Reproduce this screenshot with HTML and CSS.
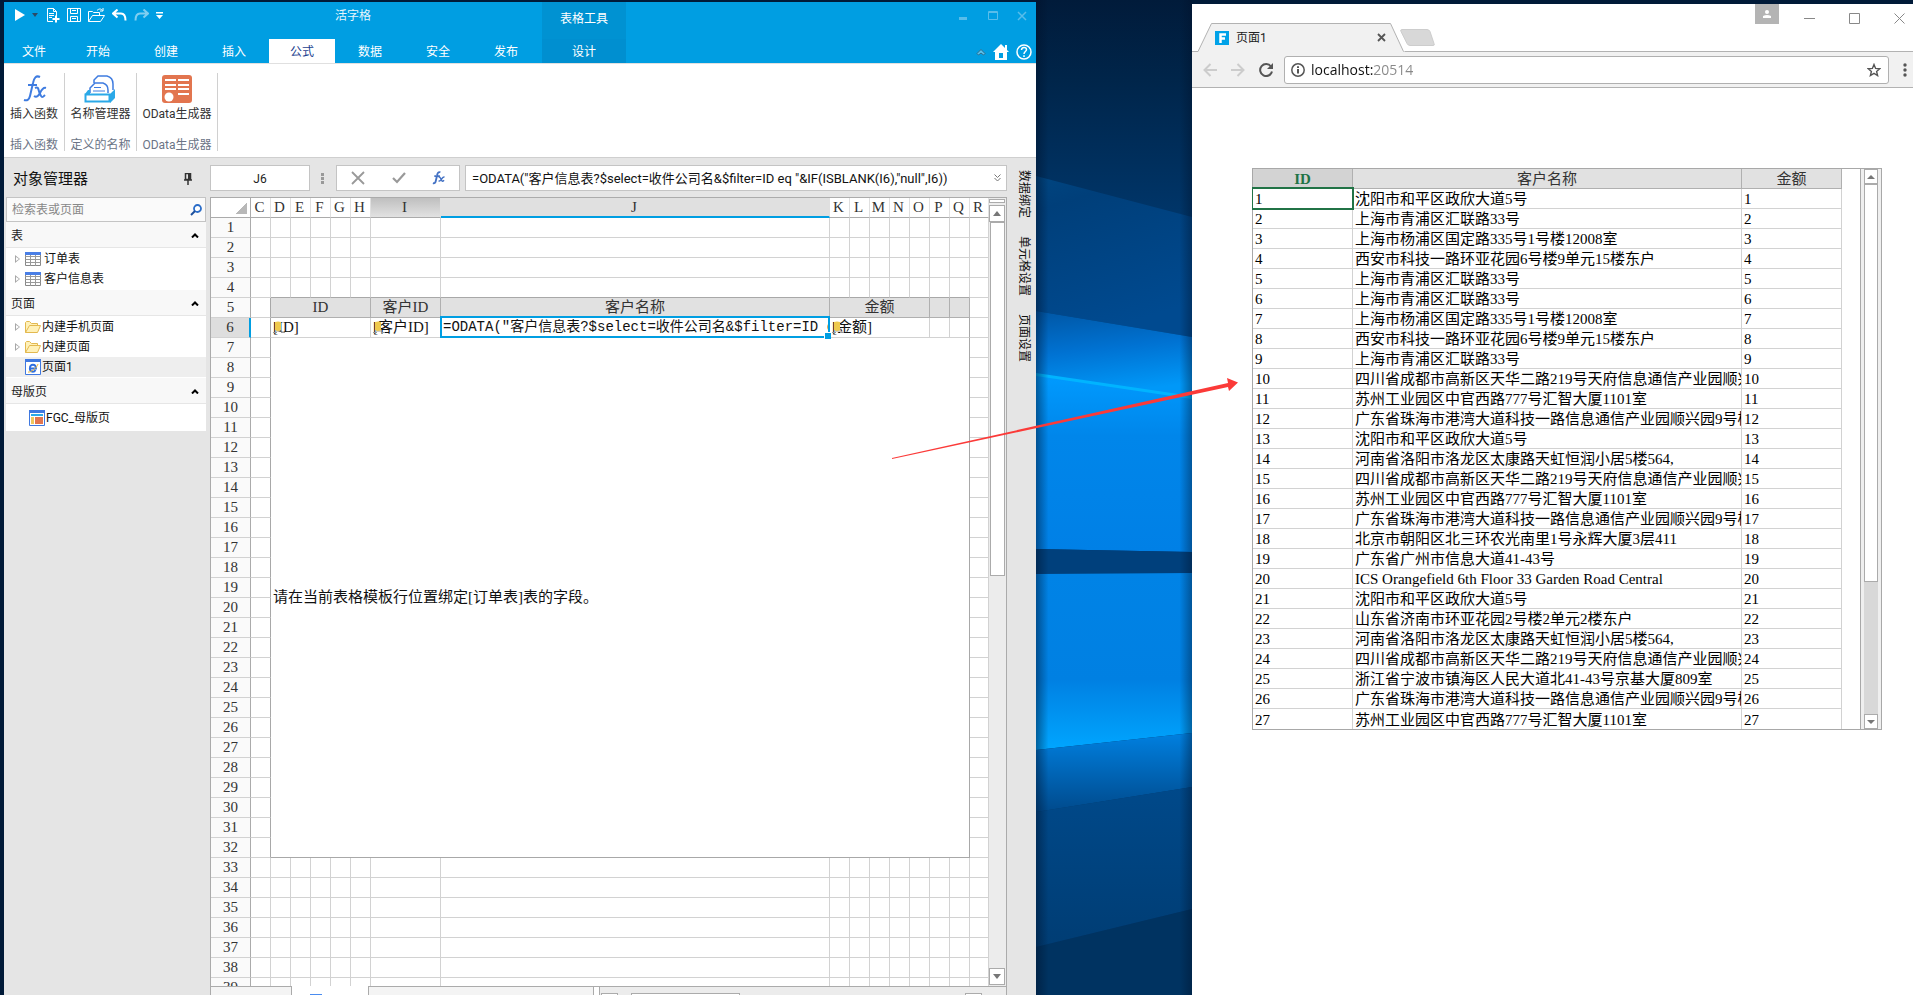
FILE: index.html
```html
<!DOCTYPE html>
<html lang="zh-CN">
<head>
<meta charset="utf-8">
<title>活字格</title>
<link rel="stylesheet" href="styles.css">
</head>
<body>
<div class="desktop">
  <main class="designer">
    <header class="titlebar">
      <div class="title-left">
        <div class="quick">
          <button class="ic" aria-label="运行"><svg width="11" height="14" viewBox="0 0 11 14"><path d="M1 1l10 6-10 6z" fill="#fff"/></svg></button>
          <button class="ic caret" aria-label="运行选项"><svg width="6" height="4" viewBox="0 0 6 4"><path d="M0 0h6L3 4z" fill="#2b4a66"/></svg></button>
          <button class="ic" aria-label="新建"><svg width="14" height="15" viewBox="0 0 14 15" fill="none" stroke="#fff"><path d="M7 13.500H1.500V.5h6l3 3V8M7.500.5v3h3M3 5.500h5M3 7.500h5M3 9.500h3"/><path d="M10 7.500v7M6.500 11h7" stroke-width="2"/></svg></button>
          <button class="ic" aria-label="保存"><svg width="14" height="15" viewBox="0 0 14 15" fill="none" stroke="#fff"><path d="M.5.5h13v13H.5zM3.500.5v5h7v-5M3.500 13.500v-5h7v5M5 10.500h4M5 2.500h4"/></svg></button>
          <button class="ic" aria-label="打开"><svg width="17" height="15" viewBox="0 0 17 15" fill="none" stroke="#fff"><path d="M.5 13.500v-10h4l1 1h6v3M.5 13.500l4-6h12l-4 6zM9 2.500c2-2 4-2 5.500 0M15 0v3h-3"/></svg></button>
          <button class="ic" aria-label="撤销"><svg width="15" height="13" viewBox="0 0 15 13"><path d="M5.500.5L1 4.500l4.500 4M1.500 4.500H9c3 0 4.500 2 4.500 7" fill="none" stroke="#fff" stroke-width="2"/></svg></button>
          <button class="ic dim" aria-label="重做"><svg width="15" height="13" viewBox="0 0 15 13"><path d="M9.500.5L14 4.500l-4.500 4M13.500 4.500H6c-3 0-4.500 2-4.500 7" fill="none" stroke="#fff" stroke-width="2"/></svg></button>
          <button class="ic" aria-label="自定义"><svg width="7" height="7" viewBox="0 0 7 7" fill="#fff"><path d="M0 0h7v1.500H0zM0 3h7L3.500 7z"/></svg></button>
        </div>
        <h1 class="app-title">活字格</h1>
      </div>
      <div class="context-title">表格工具</div>
      <div class="window-buttons">
        <button class="ic" aria-label="最小化"><svg width="10" height="10" viewBox="0 0 10 10"><path d="M0 6h8v3H0z" fill="#58bdea"/></svg></button>
        <button class="ic" aria-label="最大化"><svg width="10" height="10" viewBox="0 0 10 10"><path d="M.5.5h9v8h-9zM0 1.500h10" fill="none" stroke="#58bdea" /></svg></button>
        <button class="ic" aria-label="关闭"><svg width="10" height="10" viewBox="0 0 10 10"><path d="M1 1l8 8M9 1L1 9" stroke="#58bdea" stroke-width="1.500"/></svg></button>
      </div>
    </header>
    <nav class="tabs">
      <button class="tab first">文件</button><button class="tab">开始</button><button class="tab">创建</button><button class="tab">插入</button><button class="tab active">公式</button><button class="tab">数据</button><button class="tab">安全</button><button class="tab">发布</button><button class="tab context">设计</button>
      <div class="tab-tools">
        <button class="ic" aria-label="折叠"><svg width="10" height="8" viewBox="0 0 10 8"><path d="M1 5.500L5 1.500l4 4L7.500 7 5 5 2.500 7z" fill="#5cc3ee" stroke="#336b8a"/></svg></button>
        <button class="ic" aria-label="主页"><svg width="16" height="16" viewBox="0 0 16 16"><path d="M8 0l8 8h-2v8H2V8H0zM6 9v5h4V9zM12 1h2v5l-2-2z" fill="#fff" fill-rule="evenodd"/></svg></button>
        <button class="ic" aria-label="帮助"><svg width="16" height="16" viewBox="0 0 16 16" fill="none" stroke="#fff" stroke-width="1.500"><circle cx="8" cy="8" r="7"/><path d="M5.500 6c0-3.500 5-3.300 5-.5C10.500 7.500 8 7.500 8 10M8 11.300v1.700"/></svg></button>
      </div>
    </nav>
    <section class="ribbon">
      <div class="group g1">
        <button class="tool"><svg width="28" height="28" viewBox="0 0 28 28" fill="none" stroke="#3f7ce0"><path d="M20 2c-4-2-6 1-7 6l-3 13c-1 4-3 5-6 4M8 10h9" stroke-width="2"/><path d="M15 13c4-2 3 2 5 6s2 4 5 1M26 13c-3-1-5 3-6 5s-3 5-6 3" stroke-width="2"/></svg>插入函数</button>
        <span class="group-name">插入函数</span>
      </div>
      <div class="group g2">
        <button class="tool"><svg width="32" height="28" viewBox="0 0 32 28" fill="#fff" stroke="#3f7ce0"><path d="M10 8V5l4-4h9c4 1 6 4 6 8v6" stroke-width="1.500"/><path d="M6 18v-5l5-5h8c3 1 5 3 5 7v3" stroke-width="1.500"/><path d="M10 12.500h7M9 16h12"/><path d="M1 19l3-4h2v4zM26 19l5-5v9l-5 5z" fill="#2ba9e8" stroke="none"/><path d="M1.500 19.500h24v7h-24z" stroke="#2ba9e8" stroke-width="2"/></svg>名称管理器</button>
        <span class="group-name">定义的名称</span>
      </div>
      <div class="group g3">
        <button class="tool"><svg width="30" height="28" viewBox="0 0 30 28"><rect width="30" height="28" rx="3" fill="#e2754f"/><path d="M3 4h11v2H3zM16 4h11v2H16zM3 9h11v2H3zM16 9h11v2H16zM3 13h11v2H3zM16 13h11v2H16zM16 18h11v2H16z" fill="#fff"/><circle cx="7" cy="22" r="4.500" fill="#fff"/></svg>OData生成器</button>
        <span class="group-name">OData生成器</span>
      </div>
    </section>
    <div class="workspace">
      <aside class="explorer">
        <div class="explorer-head"><h2>对象管理器</h2><button class="ic" aria-label="固定"><svg width="8" height="12" viewBox="0 0 8 12"><path d="M1.500.5h5v6h-5zM0 7h8M4 7v5" fill="none" stroke="#333" stroke-width="1.500"/><path d="M4 1h2v6H4z" fill="#333"/></svg></button></div>
        <label class="search"><input type="text" aria-label="检索表或页面" placeholder="检索表或页面"><svg width="12" height="12" viewBox="0 0 12 12"><circle cx="7.500" cy="4.500" r="3.500" fill="#fff" stroke="#2a6cc8" stroke-width="1.800"/><path d="M5 7L1 11" stroke="#1c4f9c" stroke-width="2"/></svg></label>
        <button class="section-head">表<svg width="8" height="5" viewBox="0 0 8 5"><path d="M1 4.500L4 1.500l3 3" fill="none" stroke="#000" stroke-width="2"/></svg></button>
        <ul class="tree">
          <li><i class="twist"></i><svg width="16" height="14" viewBox="0 0 16 14"><path d="M.5.500h15v13H.5z" fill="#fff" stroke="#888"/><path d="M.5 4.500h15M.5 7.500h15M.5 10.500h15M5.500 3v11M10.500 3v11" stroke="#9a9a9a"/><path d="M0 0h16v3H0z" fill="#4a7fe6"/></svg><span class="wide">订单表</span></li>
          <li><i class="twist"></i><svg width="16" height="14" viewBox="0 0 16 14"><path d="M.5.500h15v13H.5z" fill="#fff" stroke="#888"/><path d="M.5 4.500h15M.5 7.500h15M.5 10.500h15M5.500 3v11M10.500 3v11" stroke="#9a9a9a"/><path d="M0 0h16v3H0z" fill="#4a7fe6"/></svg><span class="wide">客户信息表</span></li>
        </ul>
        <button class="section-head">页面<svg width="8" height="5" viewBox="0 0 8 5"><path d="M1 4.500L4 1.500l3 3" fill="none" stroke="#000" stroke-width="2"/></svg></button>
        <ul class="tree">
          <li><i class="twist"></i><svg width="16" height="12" viewBox="0 0 16 12"><path d="M.5 11.500V1.500l1-1h3l2 2h6v2M.5 11.500l4-7h11l-3 7z" fill="#fff1b8" stroke="#e3b94f"/></svg><span>内建手机页面</span></li>
          <li><i class="twist"></i><svg width="16" height="12" viewBox="0 0 16 12"><path d="M.5 11.500V1.500l1-1h3l2 2h6v2M.5 11.500l4-7h11l-3 7z" fill="#fff1b8" stroke="#e3b94f"/></svg><span>内建页面</span></li>
          <li class="current"><i class="twist none"></i><svg width="16" height="16" viewBox="0 0 16 16"><path d="M.5.500h15v15H.5z" fill="#fff" stroke="#3f78e0"/><path d="M0 0h16v3H0z" fill="#3f78e0"/><path d="M5 9.500h6c0-5-6-5-6.200 0 0 4 4.500 4 5.700 1.500" fill="none" stroke="#2f6fe0" stroke-width="1.800"/><path d="M3 13c2 1 9-4 10-8" fill="none" stroke="#e8b53c"/></svg><span>页面1</span></li>
        </ul>
        <button class="section-head">母版页<svg width="8" height="5" viewBox="0 0 8 5"><path d="M1 4.500L4 1.500l3 3" fill="none" stroke="#000" stroke-width="2"/></svg></button>
        <ul class="tree masters">
          <li><svg width="16" height="16" viewBox="0 0 16 16"><path d="M.5.500h15v15H.5z" fill="#fff" stroke="#3f78e0"/><path d="M0 0h16v3H0z" fill="#3f78e0"/><path d="M2 4h12v2H2z" fill="#2ba9e8"/><path d="M2 7h3v7H2z" fill="#f0c75e"/><path d="M6 7h8v7H6z" fill="#e2754f"/></svg><span>FGC_母版页</span></li>
        </ul>
      </aside>
      <section class="center">
        <div class="formula-row">
          <input class="name-box" type="text" aria-label="单元格名称" value="J6">
          <svg class="grip" width="3" height="11" viewBox="0 0 3 11"><path d="M0 0h3v3H0zM0 4h3v3H0zM0 8h3v3H0z" fill="#999"/></svg>
          <div class="formula-buttons">
            <button class="ic" aria-label="取消"><svg width="14" height="14" viewBox="0 0 14 14"><path d="M1 1l12 12M13 1L1 13" stroke="#999" stroke-width="1.800"/></svg></button>
            <button class="ic" aria-label="确认"><svg width="14" height="12" viewBox="0 0 14 12"><path d="M1 6l4 4 8-9" fill="none" stroke="#999" stroke-width="2.200"/></svg></button>
            <button class="ic" aria-label="函数"><svg width="13" height="14" viewBox="0 0 28 28" fill="none" stroke="#4472c4"><path d="M18 2c-4-2-6 1-7 6L8 21c-1 4-3 5-6 4M5 10h12" stroke-width="4"/><path d="M14 12c4-1 4 2 6 6s3 4 6 1M27 12c-4-1-5 3-7 5s-3 5-6 3" stroke-width="3"/></svg></button>
          </div>
          <div class="formula-box"><input type="text" aria-label="公式" value='=ODATA("客户信息表?$select=收件公司名&amp;$filter=ID eq "&amp;IF(ISBLANK(I6),"null",I6))'><button class="ic" aria-label="展开"><svg width="7" height="8" viewBox="0 0 7 8"><path d="M.5.5l3 3 3-3M.5 4l3 3 3-3" fill="none" stroke="#777"/></svg></button></div>
        </div>
        <div class="sheet-frame">
          <div class="sheet-view">
            <table class="sheet">
              <colgroup id="sheet-cols"></colgroup>
              <thead><tr id="sheet-head"></tr></thead>
              <tbody id="sheet-body"></tbody>
            </table>
          </div>
          <div class="vscroll">
            <div class="splitter"></div>
            <button class="arrow" aria-label="向上"><svg width="8" height="5" viewBox="0 0 8 5"><path d="M0 5l4-5 4 5z" fill="#777"/></svg></button>
            <div class="thumb"></div>
            <button class="arrow last" aria-label="向下"><svg width="8" height="5" viewBox="0 0 8 5"><path d="M0 0h8L4 5z" fill="#777"/></svg></button>
          </div>
        </div>
        <div class="sheet-bar">
          <div class="bar-lead"></div>
          <div class="bar-tab"><i></i></div>
          <div class="bar-rest"></div>
          <div class="bar-split"></div>
          <div class="hscroll"><i class="h-left"></i><i class="h-thumb"></i><i class="h-right"></i></div>
        </div>
      </section>
      <nav class="side-tabs"><button>数据绑定</button><button>单元格设置</button><button>页面设置</button></nav>
    </div>
  </main>

  <svg class="wallpaper" viewBox="0 0 156 995" preserveAspectRatio="none" aria-hidden="true">
    <defs>
      <linearGradient id="a" x1="0" y1="0" x2="0" y2="1"><stop offset="0" stop-color="#011b3a"/><stop offset=".08" stop-color="#00254a"/><stop offset=".22" stop-color="#00366a"/><stop offset="1" stop-color="#003a70"/></linearGradient>
      <linearGradient id="b" x1="0" y1="0" x2=".3" y2="1"><stop offset="0" stop-color="#004580"/><stop offset=".2" stop-color="#003f7a"/><stop offset="1" stop-color="#004a90"/></linearGradient>
      <linearGradient id="c" x1="0" y1="0" x2=".2" y2="1"><stop offset="0" stop-color="#0056a4"/><stop offset=".5" stop-color="#0072d2"/><stop offset="1" stop-color="#0098f8"/></linearGradient>
      <linearGradient id="d" x1="0" y1="0" x2="0" y2="1"><stop offset="0" stop-color="#009bff"/><stop offset=".35" stop-color="#0086ea"/><stop offset="1" stop-color="#0080e6"/></linearGradient>
      <linearGradient id="e" x1="0" y1="0" x2="0" y2="1"><stop offset="0" stop-color="#0083e6"/><stop offset=".6" stop-color="#0080e2"/><stop offset="1" stop-color="#00a6ff"/></linearGradient>
      <linearGradient id="f" x1="0" y1="0" x2="0" y2="1"><stop offset="0" stop-color="#0080e0"/><stop offset="1" stop-color="#004a8c"/></linearGradient>
      <linearGradient id="g" x1="0" y1="0" x2="0" y2="1"><stop offset="0" stop-color="#00498a"/><stop offset="1" stop-color="#003d74"/></linearGradient>
      <linearGradient id="s"><stop offset="0" stop-color="#001028" stop-opacity=".45"/><stop offset=".08" stop-color="#001028" stop-opacity="0"/><stop offset=".92" stop-color="#001028" stop-opacity="0"/><stop offset="1" stop-color="#001028" stop-opacity=".4"/></linearGradient>
    </defs>
    <rect width="156" height="995" fill="url(#a)"/>
    <path d="M0 176l156 41v120L0 311z" fill="url(#b)"/>
    <path d="M0 311l156 26v60L0 374z" fill="url(#c)"/>
    <path d="M0 374l156 23v155L0 549z" fill="url(#d)"/>
    <path d="M0 373l156 23v3L0 376z" fill="#00b4ff"/>
    <path d="M0 549l156 3v21L0 574z" fill="#00407c"/>
    <path d="M0 574l156-1v160L0 750z" fill="url(#e)"/>
    <path d="M0 750l156-17v54L0 812z" fill="url(#f)"/>
    <path d="M0 812l156-25v122L0 947z" fill="url(#g)"/>
    <path d="M0 947l156-38v86H0z" fill="#003361"/>
    <rect width="156" height="995" fill="url(#s)"/>
  </svg>

  <section class="browser">
    <header class="browser-top">
      <div class="browser-tab">
        <svg class="tab-shape" viewBox="0 0 208 29" preserveAspectRatio="none"><path d="M0 28.500h1L14.500.5h179l13 28h1.500V29H0z" fill="#f1f1f1" stroke="none"/><path d="M0 28.500h1L14.500.5h179l13 28" fill="none" stroke="#b2b2b2"/></svg>
        <svg class="favicon" width="14" height="14" viewBox="0 0 14 14"><path d="M0 0h14v14H0z" fill="#00a2e8"/><path d="M5.500 12V3.500H11M5.500 7.500H10" fill="none" stroke="#fff" stroke-width="2.500"/></svg>
        <span>页面1</span>
        <button class="ic" aria-label="关闭标签"><svg width="9" height="9" viewBox="0 0 9 9"><path d="M1 1l7 7M8 1L1 8" stroke="#555" stroke-width="1.800"/></svg></button>
      </div>
      <button class="ic new-tab" aria-label="新标签"><svg width="35" height="18" viewBox="0 0 35 18"><path d="M2 .5h25q2 0 3 2l4 12q1 2-1 2H10q-2 0-3-2L1 2.500q-1-2 1-2z" fill="#d8d8d8" stroke="#cdcdcd"/></svg></button>
      <div class="browser-controls">
        <button class="ic person" aria-label="用户"><svg width="8" height="8" viewBox="0 0 8 8" fill="#fff"><circle cx="4" cy="2" r="2"/><path d="M0 8V6q4-2 8 0v2z"/></svg></button>
        <button class="ic" aria-label="最小化"><svg width="11" height="11" viewBox="0 0 11 11"><path d="M0 5.500h11" stroke="#888"/></svg></button>
        <button class="ic" aria-label="最大化"><svg width="11" height="11" viewBox="0 0 11 11"><path d="M.5.5h10v10H.5z" fill="none" stroke="#888"/></svg></button>
        <button class="ic" aria-label="关闭"><svg width="11" height="11" viewBox="0 0 11 11"><path d="M.5.5l10 10M10.500.5l-10 10" stroke="#888"/></svg></button>
      </div>
    </header>
    <div class="toolbar">
      <button class="ic" aria-label="后退"><svg width="14" height="14" viewBox="0 0 14 14"><path d="M14 7H2M7.500 1L1.500 7l6 6" fill="none" stroke="#ccc" stroke-width="2"/></svg></button>
      <button class="ic" aria-label="前进"><svg width="14" height="14" viewBox="0 0 14 14"><path d="M0 7h12M6.500 1l6 6-6 6" fill="none" stroke="#ccc" stroke-width="2"/></svg></button>
      <button class="ic" aria-label="刷新"><svg width="14" height="14" viewBox="0 0 14 14"><path d="M12 3.500A6 6 0 1 0 13 8.500" fill="none" stroke="#555" stroke-width="2"/><path d="M14 0v6H8z" fill="#555"/></svg></button>
      <div class="omnibox">
        <svg width="14" height="14" viewBox="0 0 14 14"><circle cx="7" cy="7" r="6.200" fill="none" stroke="#555" stroke-width="1.500"/><path d="M6 6h2v4.500H6zM6 3.200h2v1.800H6z" fill="#555"/></svg>
        <input type="text" aria-label="地址" value="localhost:20514">
        <button class="ic" aria-label="收藏"><svg width="14" height="14" viewBox="0 0 14 14"><path d="M7 1.500l1.600 3.900 4.200.3-3.200 2.700 1 4.100L7 10.300l-3.600 2.200 1-4.100L1.200 5.700l4.200-.3z" fill="none" stroke="#555" stroke-width="1.400"/></svg></button>
      </div>
      <button class="ic menu" aria-label="菜单"><svg width="4" height="14" viewBox="0 0 4 14" fill="#555"><circle cx="2" cy="2" r="1.700"/><circle cx="2" cy="7" r="1.700"/><circle cx="2" cy="12" r="1.700"/></svg></button>
    </div>
    <div class="page">
      <div class="result">
        <div class="result-view">
          <table class="orders">
            <colgroup><col class="c-id"><col><col class="c-sum"></colgroup>
            <thead><tr><th class="picked">ID</th><th>客户名称</th><th>金额</th></tr></thead>
            <tbody id="orders-body"></tbody>
          </table>
        </div>
        <div class="rscroll">
          <button class="arrow" aria-label="向上"><svg width="8" height="4" viewBox="0 0 8 4"><path d="M0 4l4-4 4 4z" fill="#777"/></svg></button>
          <div class="thumb"></div>
          <button class="arrow last" aria-label="向下"><svg width="8" height="4" viewBox="0 0 8 4"><path d="M0 0h8L4 4z" fill="#777"/></svg></button>
        </div>
      </div>
    </div>
  </section>
  <svg class="pointer" width="348" height="84" viewBox="0 0 348 84" aria-hidden="true"><path d="M1 83L337 8l-1-5 11 4.500L338 16l-1-4L1 84z" fill="#fb3a38"/></svg>
</div>
<script src="app.js"></script>
</body>
</html>
```
FILE: styles.css
```css
* { box-sizing: border-box; }
body { margin: 0; background: #001a38; font: 12px/16px Roboto, "Noto Sans CJK SC", sans-serif; color: #222; }
button, input { font: inherit; color: inherit; border: 0; padding: 0; margin: 0; background: none; min-width: 0; outline: 0; }
h1, h2, ul { margin: 0; padding: 0; font-weight: normal; list-style: none; }
svg { display: block; flex: none; }
.ic { display: flex; align-items: center; justify-content: center; flex: none; }

.desktop { position: relative; display: flex; height: 100vh; overflow: hidden; padding-left: 4px; }
.designer { flex: 1032 1 0; min-width: 0; margin-top: 2px; display: flex; flex-direction: column; background: #e5e5e5; }
.wallpaper { flex: 156 1 0; min-width: 0; height: 100%; }
.browser { flex: 721 1 0; min-width: 0; margin-top: 4px; background: #fff; display: flex; flex-direction: column; }

.titlebar { display: flex; height: 37px; background: #009ee2; color: #fff; }
.title-left { width: 538px; display: flex; }
.quick { display: flex; align-items: center; gap: 7px; height: 26px; padding-left: 10px; width: 331px; }
.quick .caret { margin: 0 1px 0 0; }
.dim { opacity: .5; }
.app-title { font-size: 12px; line-height: 28px; color: #e6f5fc; }
.context-title { width: 84px; background: #0092d2; text-align: center; line-height: 34px; }
.window-buttons { margin-left: auto; display: flex; gap: 19px; height: 28px; align-items: center; padding-right: 9px; }

.tabs { display: flex; height: 24px; background: #009ee2; color: #fff; }
.tab { width: 68px; padding-top: 2px; line-height: 22px; text-align: center; }
.tab.first { width: 60px; }
.tab.active { width: 66px; margin: 0 1px; background: #fff; color: #1d3f8f; }
.tab.context { width: 84px; margin-left: 2px; background: #008fd0; }
.tab-tools { margin-left: auto; display: flex; align-items: center; gap: 7px; padding: 2px 4px 0 0; }

.ribbon { display: flex; height: 95px; background: #fff; border-top: 1px solid #e0e0e0; border-bottom: 1px solid #cfcfcf; padding-top: 9px; }
.group { display: flex; flex-direction: column; align-items: center; height: 78px; border-right: 1px solid #d0d0d0; }
.g1 { width: 61px; } .g2 { width: 72px; } .g3 { width: 81px; }
.tool { display: flex; flex-direction: column; align-items: center; gap: 3px; white-space: nowrap; padding-top: 2px; color: #333; }
.group-name { margin-top: 15px; white-space: nowrap; color: #6b7486; }

.workspace { flex: 1; min-height: 0; display: flex; }
.explorer { width: 200px; margin: 0 4px 0 2px; flex: none; }
.explorer-head { display: flex; align-items: center; justify-content: space-between; height: 39px; padding: 2px 14px 0 7px; }
.explorer-head h2 { font-size: 15px; line-height: 22px; color: #111; }
.search { display: flex; align-items: center; height: 25px; border: 1px solid #c4c4c4; background: #fafafa; padding: 0 3px 0 5px; }
.search input { flex: 1; }
.search input::placeholder { color: #888; opacity: 1; }
.section-head { display: flex; width: 100%; height: 26px; align-items: center; justify-content: space-between; padding: 2px 7px 0 5px; background: #f8f8f8; border-bottom: 1px solid #e6e6e6; }
.tree { background: #fff; padding: 1px 0; color: #111; }
.tree li { display: flex; align-items: center; height: 20px; padding-left: 9px; white-space: nowrap; }
.tree span { padding-left: 1px; }
.tree span.wide { padding-left: 3px; }
.twist { width: 10px; height: 8px; flex: none; background: #a8a8a8; clip-path: path(evenodd, "M0 0L5 4L0 8ZM1 2V6L4 4Z"); }
.twist.none { visibility: hidden; }
.current { background: #eee; }
.tree.masters { padding: 4px 0 3px; }
.masters li { padding-left: 23px; }

.center { flex: 1; min-width: 0; display: flex; flex-direction: column; }
.formula-row { display: flex; align-items: center; height: 26px; margin: 7px 0 6px; flex: none; }
.name-box { width: 100px; height: 26px; border: 1px solid #c4c4c4; background: #fff; text-align: center; padding-top: 2px; }
.grip { margin: 0 12px 0 11px; }
.formula-buttons { display: flex; align-items: center; justify-content: space-between; width: 124px; height: 26px; margin-right: 5px; padding: 0 14px; border: 1px solid #c4c4c4; background: #fff; }
.formula-box { flex: 1; min-width: 0; display: flex; align-items: center; height: 26px; border: 1px solid #c4c4c4; background: #fff; padding: 0 5px 0 6px; color: #111; }
.formula-box input { flex: 1; font-size: 13px; padding-top: 2px; }

.sheet-frame { flex: 1; min-height: 0; display: flex; border: 1px solid #ababab; background: #fff; }
.sheet-view { flex: 1; min-width: 0; overflow: hidden; }
.sheet, .orders { width: 100%; table-layout: fixed; border-collapse: separate; border-spacing: 0; font: 15px/19px "Liberation Serif", "Noto Sans CJK SC", serif; }
.sheet th, .sheet td, .orders th, .orders td { height: 20px; padding: 0; border: 0 solid #d2d2d2; border-width: 0 1px 1px 0; font-weight: normal; overflow: hidden; white-space: nowrap; text-align: center; }
.c-head { width: 40px; } .c-small { width: 20px; } .c-mid { width: 70px; } .c-end { width: 19px; }
.sheet th { color: #333; }
.sheet thead th { border-right-color: #e0e0e0; border-bottom-color: #ababab; padding-right: 2px; }
.sheet thead .corner { border-right-color: #ababab; background: linear-gradient(135deg, #fff 50%, #b8b8b8 50%) 24px 4px / 12px 12px no-repeat; }
.sheet thead .near { background: linear-gradient(#bfbfbf, #e2e2e2); }
.sheet thead .on { background: #e0e0e0; border-bottom: 2px solid #009ee2; line-height: 18px; }
.sheet tbody th { background: #fafafa; border-right-color: #ababab; }
.sheet tbody th.on { background: #dedede; border-right: 2px solid #009ee2; }
.sheet td.edge-b { border-bottom-color: #a8a8a8; }
.sheet td.edge-r { border-right-color: #a8a8a8; }
.sheet td.caption { background: #e1e1e1; border-color: #b0b0b0; color: #333; }
.sheet td.field { position: relative; text-align: left; padding-left: 2px; color: #111; }
.field svg { position: absolute; left: 2px; top: 3px; }
.sheet td.editing { position: relative; overflow: visible; color: #111; }
.editing div { overflow: hidden; text-align: left; padding-left: 2px; font: 14px/19px "Liberation Mono", "Noto Sans CJK SC", monospace; }
.editing::before { content: ""; position: absolute; inset: -2px -1px -1px -1px; border: 2px solid #009ee2; z-index: 1; }
.editing::after { content: ""; position: absolute; right: -2px; bottom: -2px; width: 6px; height: 6px; background: #009ee2; border: 1px solid #fff; border-width: 1px 0 0 1px; z-index: 2; }
.sheet td.note { text-align: left; padding-left: 2px; border-color: #a8a8a8; color: #111; }

.vscroll { width: 17px; display: flex; flex-direction: column; background: #ececec; padding: 1px 1px 1px 0; }
.splitter { height: 4px; border: 1px solid #ababab; background: #fff; }
.arrow { display: flex; align-items: center; justify-content: center; flex: none; height: 17px; border: 1px solid #ababab; background: #fff; }
.vscroll .arrow { margin-top: 2px; }
.thumb { border: 1px solid #ababab; background: #fff; flex: 0 0 45%; }
.vscroll .thumb { margin-left: 1px; }
.vscroll .arrow.last, .rscroll .arrow.last { margin-top: auto; }

.sheet-bar { display: flex; height: 9px; flex: none; margin-top: -1px; overflow: hidden; }
.bar-lead { width: 82px; background: #f4f4f4; border: 1px solid #ababab; border-width: 1px 1px 0; }
.bar-tab { width: 76px; background: #fff; padding: 8px 0 0 18px; }
.bar-tab i { display: block; width: 12px; height: 1px; background: #4a8cf0; }
.bar-rest { flex: 234 1 0; background: #f4f4f4; border: 1px solid #ababab; border-width: 1px 1px 0; }
.bar-split { width: 6px; background: #fff; border: 1px solid #ababab; border-width: 1px 1px 0 0; }
.hscroll { flex: 399 1 0; display: flex; background: #ececec; border: 1px solid #ababab; border-width: 1px 1px 0 0; padding: 6px 24px 0 1px; }
.hscroll i { height: 16px; background: #fff; border: 1px solid #ababab; }
.h-left, .h-right { width: 17px; }
.h-thumb { width: 109px; margin-left: 13px; }
.h-right { margin-left: auto; }

.side-tabs { width: 29px; flex: none; display: flex; flex-direction: column; align-items: center; gap: 18px; padding: 12px 0 0 5px; }
.side-tabs button { writing-mode: vertical-rl; text-orientation: sideways; color: #111; }

.browser-top { display: flex; height: 48px; flex: none; border-bottom: 1px solid #b2b2b2; }
.browser-tab { position: relative; display: flex; align-items: center; width: 208px; height: 29px; margin: 19px 0 0 5px; padding: 0 19px 0 18px; gap: 7px; color: #222; }
.tab-shape { position: absolute; left: 0; top: 0; width: 100%; height: 100%; }
.browser-tab > :not(.tab-shape) { position: relative; }
.browser-tab button { margin-left: auto; }
.new-tab { height: 18px; margin: 25px 0 0 -5px; }
.browser-controls { margin-left: auto; display: flex; gap: 34px; height: 29px; align-items: center; padding-right: 8px; }
.person { width: 24px; height: 20px; align-self: flex-start; margin-right: -9px; background: #b4b4b4; }
.toolbar { display: flex; align-items: center; height: 36px; flex: none; background: #f1f1f1; border-bottom: 1px solid #b2b2b2; padding: 0 6px 0 11px; gap: 14px; }
.omnibox { flex: 1; display: flex; align-items: center; height: 28px; margin-left: -3px; border: 1px solid #b0b0b0; border-radius: 3px; background: #fff; padding: 0 7px 0 6px; gap: 6px; }
.omnibox input { flex: 1; font: 14px/20px "Open Sans", sans-serif; color: transparent; background: linear-gradient(90deg, #111 62px, #888 62px); background-clip: text; -webkit-background-clip: text; }
.page { padding: 80px 31px 0 60px; }
.result { display: flex; border: 1px solid #a8a8a8; }
.result-view { flex: 1; min-width: 0; padding-right: 18px; border-right: 1px solid #a8a8a8; }
.orders { color: #000; }
.c-id, .c-sum { width: 100px; }
.orders th, .orders td { padding-top: 1px; line-height: 18px; }
.orders thead th { background: #e1e1e1; border-color: #b0b0b0; color: #333; }
.orders thead .picked { background: #d3d3d3; color: #217346; font-weight: bold; }
.orders td { text-align: left; padding-left: 2px; }
.orders tr:last-child td { border-bottom: 0; }
.orders td.picked { position: relative; overflow: visible; }
td.picked::after { content: ""; position: absolute; inset: -2px -2px -2px -1px; border: 2px solid #217346; border-left-width: 1px; }
.rscroll { width: 20px; display: flex; flex-direction: column; background: linear-gradient(90deg, #efefef 3px, #d8d8d8 3px, #d8d8d8 17px, #efefef 17px); padding: 0 3px; }
.rscroll .arrow { height: 15px; }
.rscroll .thumb { flex-basis: 71%; }

.pointer { position: absolute; left: 891px; top: 375px; z-index: 5; }
```
FILE: app.js
```js
const letters = "CDEFGHIJKLMNOPQR".split("");
const widths = { I: "c-mid", J: "", R: "c-end" };
document.getElementById("sheet-cols").innerHTML =
  '<col class="c-head">' + letters.map(l => `<col class="${l in widths ? widths[l] : "c-small"}">`).join("");
document.getElementById("sheet-head").innerHTML =
  '<th class="corner"></th>' + letters.map(l => `<th class="${l === "I" ? "near" : l === "J" ? "on" : ""}">${l}</th>`).join("");

const bind = '<svg width="12" height="12" viewBox="0 0 12 12"><path d="M0 11.500h4M8 11.500h4M3 10h6" stroke="#999"/><path d="M2 1q3-1 6 0v8q-3 2-6 0z" fill="#efc94c"/></svg>';
const formula = '=ODATA("客户信息表?$select=收件公司名&amp;$filter=ID eq "';

function cells(row) {
  if (row === 5) {
    return '<td class="edge-r"></td><td class="caption" colspan="5">ID</td><td class="caption">客户ID</td>' +
      '<td class="caption">客户名称</td><td class="caption" colspan="5">金额</td>' +
      '<td class="caption"></td><td class="caption"></td><td></td>';
  }
  if (row === 6) {
    return `<td class="edge-r"></td><td class="field" colspan="5">[ID]${bind}</td><td class="field">[客户ID]${bind}</td>` +
      `<td class="editing"><div>${formula}</div></td><td class="field" colspan="5">[金额]${bind}</td>` +
      '<td></td><td class="edge-r"></td><td></td>';
  }
  if (row === 7) {
    return '<td class="edge-r"></td><td class="note" colspan="14" rowspan="26">请在当前表格模板行位置绑定[订单表]表的字段。</td><td></td>';
  }
  if (row > 7 && row < 33) return '<td class="edge-r"></td><td></td>';
  return letters.map((l, i) => `<td${row === 4 && i > 0 && i < 15 ? ' class="edge-b"' : ""}></td>`).join("");
}

let rows = "";
for (let r = 1; r <= 39; r++) rows += `<tr><th${r === 6 ? ' class="on"' : ""}>${r}</th>${cells(r)}</tr>`;
document.getElementById("sheet-body").innerHTML = rows;

const shenyang = "沈阳市和平区政欣大道5号";
const qingpu = "上海市青浦区汇联路33号";
const yangpu = "上海市杨浦区国定路335号1号楼12008室";
const xian = "西安市科技一路环亚花园6号楼9单元15楼东户";
const chengdu = "四川省成都市高新区天华二路219号天府信息通信产业园顺兴";
const suzhou = "苏州工业园区中官西路777号汇智大厦1101室";
const zhuhai = "广东省珠海市港湾大道科技一路信息通信产业园顺兴园9号楼";
const luoyang = "河南省洛阳市洛龙区太康路天虹恒润小居5楼564,";
const names = [
  shenyang, qingpu, yangpu, xian, qingpu, qingpu, yangpu, xian, qingpu,
  chengdu, suzhou, zhuhai, shenyang, luoyang, chengdu, suzhou, zhuhai,
  "北京市朝阳区北三环农光南里1号永辉大厦3层411",
  "广东省广州市信息大道41-43号",
  "ICS Orangefield 6th Floor 33 Garden Road Central",
  shenyang, "山东省济南市环亚花园2号楼2单元2楼东户", luoyang, chengdu,
  "浙江省宁波市镇海区人民大道北41-43号京基大厦809室", zhuhai, suzhou
];
document.getElementById("orders-body").innerHTML = names.map((n, i) =>
  `<tr><td${i === 0 ? ' class="picked"' : ""}>${i + 1}</td><td>${n}</td><td>${i + 1}</td></tr>`).join("");
```
